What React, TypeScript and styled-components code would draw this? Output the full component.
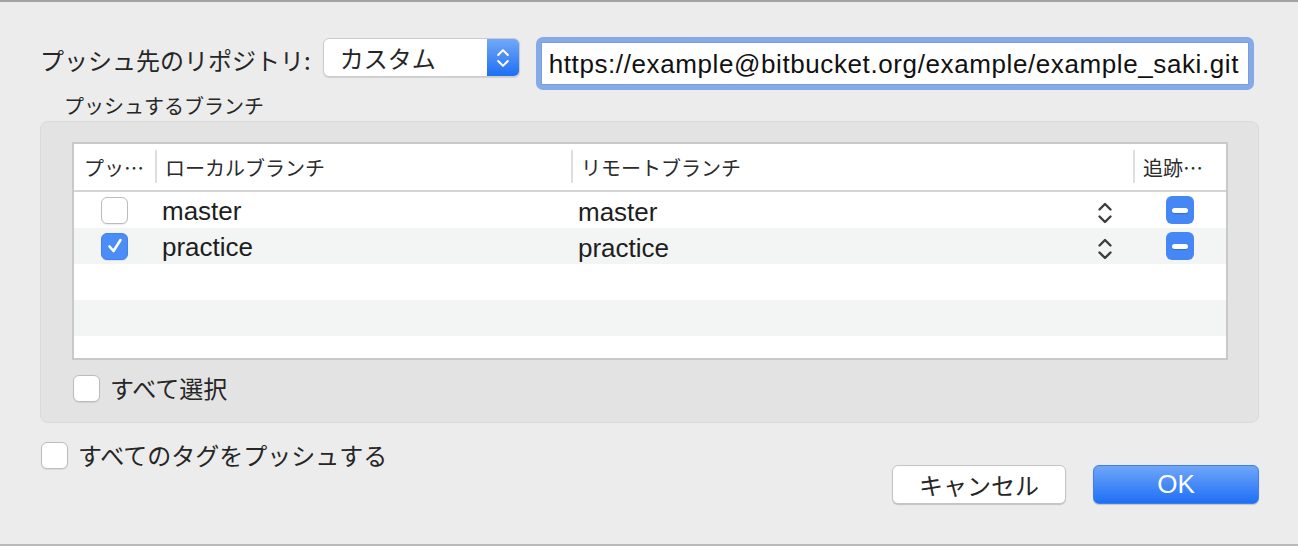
import React from 'react';
import styled, { createGlobalStyle } from 'styled-components';

const jp = `"Noto Sans CJK JP", "Noto Sans", sans-serif`;
const latin = `"Liberation Sans", Arial, sans-serif`;

const GlobalStyle = createGlobalStyle`
  html, body {
    margin: 0;
    padding: 0;
    background: #ececec;
  }
  * {
    box-sizing: border-box;
  }
`;

const Dialog = styled.div`
  width: 1298px;
  height: 546px;
  background: #ececec;
  border-top: 2px solid #a2a2a2;
  border-bottom: 2px solid #b9b9b9;
  padding: 35px 39px 0 40px;
  display: flex;
  flex-direction: column;
  color: #262626;
  font-family: ${jp};
`;

const TopRow = styled.div`
  display: flex;
  align-items: flex-start;
  padding-right: 5px;
`;

const FieldLabel = styled.div`
  font-size: 24px;
  line-height: 28px;
  margin-top: 9px;
  white-space: nowrap;
`;

const Popup = styled.div`
  margin-left: 12px;
  margin-top: 1px;
  width: 197px;
  height: 39px;
  display: flex;
  border-radius: 6px;
  background: #fff;
  border: 1px solid #cbcbcb;
  box-shadow: 0 1px 1px rgba(0, 0, 0, 0.12);
  overflow: hidden;
`;

const PopupText = styled.div`
  flex: 1;
  padding-left: 16px;
  font-size: 24px;
  line-height: 37px;
`;

const PopupArrows = styled.div`
  width: 32px;
  display: flex;
  align-items: center;
  justify-content: center;
  background: linear-gradient(#72a8f8, #1f6ff3);
`;

const UrlField = styled.div`
  margin-left: 16px;
  flex: 1;
  height: 53px;
  padding: 5px;
  border-radius: 7px;
  background: #84aaea;
`;

const UrlInput = styled.div`
  height: 100%;
  background: #fff;
  border: 1px solid #7d9ed8;
  padding-left: 7px;
  padding-top: 1px;
  font-family: ${latin};
  font-size: 26px;
  letter-spacing: 0.6px;
  line-height: 41px;
  color: #111;
  white-space: nowrap;
  overflow: hidden;
`;

const SectionLabel = styled.div`
  font-size: 20px;
  line-height: 24px;
  margin: 4px 0 3px 24px;
`;

const Group = styled.div`
  height: 302px;
  background: #e3e3e3;
  border: 1px solid #dadada;
  border-radius: 8px;
  padding: 20px 30px 0 31px;
`;

const Table = styled.div`
  height: 218px;
  background: #fff;
  border: 2px solid #c9c9c9;
  overflow: hidden;
`;

const cols = `81px 416px 562px 1fr`;

const HeaderRow = styled.div`
  display: grid;
  grid-template-columns: ${cols};
  height: 48px;
  border-bottom: 2px solid #d5d5d5;
`;

const HeaderCell = styled.div<{ $sep?: boolean }>`
  position: relative;
  display: flex;
  align-items: center;
  padding-left: 10px;
  font-size: 20px;
  color: #2b2b2b;
  white-space: nowrap;

  ${(p) =>
    p.$sep &&
    `
    &::before {
      content: '';
      position: absolute;
      left: 0;
      top: 6px;
      bottom: 7px;
      width: 2px;
      background: #dedede;
    }
  `}
`;

const Row = styled.div<{ $alt?: boolean }>`
  display: grid;
  grid-template-columns: ${cols};
  height: 36px;
  background: ${(p) => (p.$alt ? '#f3f4f4' : '#fff')};
`;

const CenterCell = styled.div`
  display: flex;
  align-items: center;
  justify-content: center;
`;

const NameCell = styled.div`
  display: flex;
  align-items: center;
  padding-left: 7px;
  padding-top: 3px;
  font-family: ${latin};
  font-size: 26px;
  color: #1e1e1e;
`;

const RemoteCell = styled(NameCell)`
  justify-content: space-between;
  padding-right: 20px;
  padding-top: 5px;
`;

const Box = styled.div<{ $checked?: boolean }>`
  width: 27px;
  height: 27px;
  flex: none;
  border-radius: 6px;
  display: flex;
  align-items: center;
  justify-content: center;
  background: ${(p) => (p.$checked ? '#4a8df7' : '#fff')};
  border: 1px solid ${(p) => (p.$checked ? '#3f82ec' : '#bcbcbc')};
  box-shadow: 0 1px 1px rgba(0, 0, 0, 0.08);
`;

const MinusButton = styled.div`
  width: 28px;
  height: 28px;
  border-radius: 6px;
  background: #4588f5;
  display: flex;
  align-items: center;
  justify-content: center;

  &::after {
    content: '';
    width: 16px;
    height: 5px;
    border-radius: 3px;
    background: #fff;
    box-shadow: 0 1px 1px rgba(0, 0, 0, 0.2);
  }
`;

const CheckRow = styled.label<{ $indent?: number }>`
  display: flex;
  align-items: center;
  gap: 10px;
  font-size: 24px;
  line-height: 28px;
  margin-left: ${(p) => p.$indent ?? 0}px;
`;

const SelectAll = styled(CheckRow)`
  margin-top: 14px;
`;

const Footer = styled.div`
  display: flex;
  justify-content: space-between;
  align-items: flex-start;
  margin-top: 18px;
`;

const Buttons = styled.div`
  display: flex;
  gap: 27px;
  margin-top: 24px;
`;

const Button = styled.div<{ $primary?: boolean; $w: number }>`
  width: ${(p) => p.$w}px;
  height: 39px;
  border-radius: 6px;
  display: flex;
  align-items: center;
  justify-content: center;
  font-size: ${(p) => (p.$primary ? '26px' : '24px')};
  font-family: ${(p) => (p.$primary ? latin : jp)};
  color: ${(p) => (p.$primary ? '#fff' : '#262626')};
  background: ${(p) => (p.$primary ? 'linear-gradient(#6fa6fa, #1f6ff5)' : '#fff')};
  border: 1px solid ${(p) => (p.$primary ? '#3f7fe8' : '#c4c4c4')};
  box-shadow: 0 1px 1px rgba(0, 0, 0, 0.18);
`;

const UpDown: React.FC<{ color: string; w: number; h: number; sw: number }> = ({ color, w, h, sw }) => (
  <svg width={w} height={h} viewBox="0 0 16 24" fill="none">
    <path d="M2.5 8.5 L8 3 L13.5 8.5" stroke={color} strokeWidth={sw} strokeLinecap="round" strokeLinejoin="round" />
    <path d="M2.5 15.5 L8 21 L13.5 15.5" stroke={color} strokeWidth={sw} strokeLinecap="round" strokeLinejoin="round" />
  </svg>
);

const Check = () => (
  <svg width="18" height="18" viewBox="0 0 18 18" fill="none">
    <path d="M3.5 9.5 L7.5 14 L14.5 3" stroke="#fff" strokeWidth="2.6" strokeLinecap="round" strokeLinejoin="round" />
  </svg>
);

const Checkbox: React.FC<{ checked?: boolean }> = ({ checked }) => (
  <Box $checked={checked}>{checked && <Check />}</Box>
);

const branches = [
  { name: 'master', push: false },
  { name: 'practice', push: true },
];

export default function App() {
  return (
    <>
      <GlobalStyle />
      <Dialog>
        <TopRow>
          <FieldLabel>プッシュ先のリポジトリ:</FieldLabel>
          <Popup>
            <PopupText>カスタム</PopupText>
            <PopupArrows>
              <UpDown color="#fff" w={14} h={24} sw={2.4} />
            </PopupArrows>
          </Popup>
          <UrlField>
            <UrlInput>https://example@bitbucket.org/example/example_saki.git</UrlInput>
          </UrlField>
        </TopRow>

        <SectionLabel>プッシュするブランチ</SectionLabel>
        <Group>
          <Table>
            <HeaderRow>
              <HeaderCell>プッ…</HeaderCell>
              <HeaderCell $sep>ローカルブランチ</HeaderCell>
              <HeaderCell $sep>リモートブランチ</HeaderCell>
              <HeaderCell $sep>追跡…</HeaderCell>
            </HeaderRow>
            {branches.map((b, i) => (
              <Row key={b.name} $alt={i % 2 === 1}>
                <CenterCell>
                  <Checkbox checked={b.push} />
                </CenterCell>
                <NameCell>{b.name}</NameCell>
                <RemoteCell>
                  {b.name}
                  <UpDown color="#3d3d3d" w={16} h={24} sw={2.4} />
                </RemoteCell>
                <CenterCell>
                  <MinusButton />
                </CenterCell>
              </Row>
            ))}
            <Row />
            <Row $alt />
            <Row />
          </Table>
          <SelectAll $indent={1}>
            <Checkbox />
            すべて選択
          </SelectAll>
        </Group>

        <Footer>
          <CheckRow $indent={1}>
            <Checkbox />
            すべてのタグをプッシュする
          </CheckRow>
          <Buttons>
            <Button $w={174}>キャンセル</Button>
            <Button $w={166} $primary>
              OK
            </Button>
          </Buttons>
        </Footer>
      </Dialog>
    </>
  );
}
